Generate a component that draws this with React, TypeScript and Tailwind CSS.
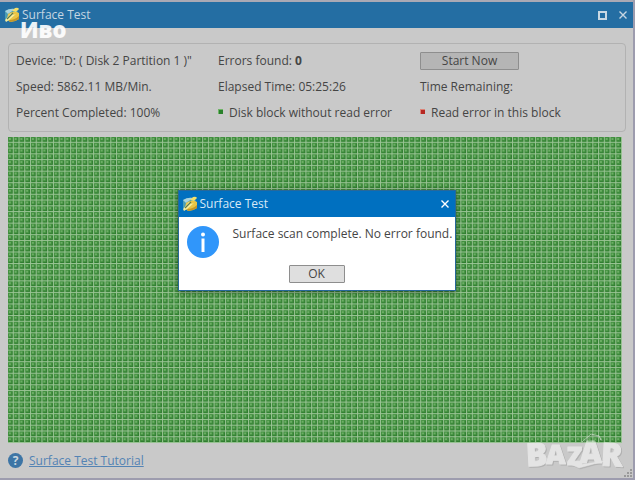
import React from "react";

const COLUMNS = 107;
const ROWS = 53;
const CELL = 6;

const cells = Array.from({ length: COLUMNS * ROWS }, (_, i) => [
  (i % COLUMNS) * CELL,
  Math.floor(i / COLUMNS) * CELL,
]);
const shadePath = cells.map(([x, y]) => `M${x + 5} ${y + 1}v4h-4v-1h3v-3z`).join("");
const glossPath = cells.map(([x, y]) => `M${x + 1} ${y + 1}h2v2h-2z`).join("");
const linePath =
  Array.from({ length: COLUMNS }, (_, i) => `M${i * CELL + 5.5} 0V${ROWS * CELL}`).join("") +
  Array.from({ length: ROWS }, (_, i) => `M0 ${i * CELL + 5.5}H${COLUMNS * CELL}`).join("");

function DiskIcon({ className }: { className: string }) {
  return (
    <svg viewBox="0 0 16 16" className={className} aria-hidden="true">
      <path d="M1 4Q6 1 11 2L14 5 13 12 7 15 1 12Z" fill="#4a9db4" />
      <path d="M1 4Q6 1 11 2L4 7Z" fill="#a9d3de" />
      <path d="M4 7Q10 3 15 6L15 12Q11 15 6 15L3 12Z" fill="#e9c545" />
      <path d="M5 13Q11 13 15 9V12Q11 15 6 15Z" fill="#c3962a" />
      <path d="M1 13 7 6Q9 9 12 7L5 13 2 15Z" fill="#f7ee9f" />
      <path d="M3 12 9 6" stroke="#5c7a4d" strokeWidth="1.2" />
      <path d="M8 4 11 1Q14 0 15 2L12 5Z" fill="#f5df6a" />
    </svg>
  );
}

function Close({ className }: { className: string }) {
  return (
    <svg viewBox="0 0 8 8" className={className} aria-hidden="true">
      <path d="M.5.5 7.5 7.5M7.5.5.5 7.5" stroke="currentColor" strokeWidth="1.4" />
    </svg>
  );
}

function BlockMap() {
  return (
    <svg
      viewBox={`0 0 ${COLUMNS * CELL} ${ROWS * CELL}`}
      preserveAspectRatio="none"
      className="block min-h-0 w-full flex-1"
      role="img"
      aria-label="Disk blocks"
    >
      <rect width="100%" height="100%" fill="#439040" />
      <path d={shadePath} fill="#317d31" />
      <path d={glossPath} fill="#6cae65" />
      <path d={linePath} stroke="#9cc497" strokeWidth="1" />
    </svg>
  );
}

function Legend({ red, children }: { red?: boolean; children: React.ReactNode }) {
  return (
    <div className="flex items-center gap-1.5">
      <span className={`mb-1 size-[5px] border-t border-l ${red ? "border-[#dc8377] bg-[#b62822]" : "border-[#70b568] bg-[#29812b]"}`} />
      <span>{children}</span>
    </div>
  );
}

export default function App() {
  return (
    <div className="relative flex h-screen flex-col overflow-hidden bg-[#9d9cae] pr-0.5 pb-0.5 font-['Open_Sans','Noto_Sans',sans-serif] text-[12px] leading-4 text-[#454545]">
      <div className="grid h-0.5 shrink-0 grid-cols-[103fr_66fr_78fr_95fr_196fr_73fr] items-end overflow-hidden bg-[#aaa9b4] pl-6 text-[11px] leading-3 text-[#555]">
        <span className="-mb-0.5">Capacity</span>
        <span className="-mb-0.5">Used</span>
        <span className="-mb-0.5">Unused</span>
        <span className="-mb-0.5">File System</span>
        <span className="-mb-0.5">Type</span>
        <span className="-mb-0.5">Status</span>
      </div>
      <main className="flex min-h-0 flex-1 flex-col bg-[#c9c9c9]">
        <header className="flex h-[26px] shrink-0 items-center bg-[#246ea3] pr-1.5 pl-1 text-[#c6d6e2]">
          <DiskIcon className="mr-0.5 size-4" />
          <h1>Surface Test</h1>
          <button aria-label="Maximize" className="mr-3 ml-auto size-[9px] border-2 border-[#c9d8e3]" />
          <button aria-label="Close"><Close className="size-2" /></button>
        </header>
        <div className="flex min-h-0 flex-1 flex-col px-2 pt-[15px]">
          <section className="mr-[-1px] grid h-[89px] shrink-0 grid-cols-3 grid-rows-[34px_18px_34px] items-center gap-x-1 rounded border border-[#b2b2b2] px-[7px] whitespace-nowrap">
            <span>Device: "D: ( Disk 2 Partition 1 )"</span>
            <span>Errors found: <b>0</b></span>
            <button className="h-[18px] w-[99px] rounded-[1px] border border-[#8e8e8e] bg-[#b5b5b5] leading-4">Start Now</button>
            <span>Speed: 5862.11 MB/Min.</span>
            <span>Elapsed Time: 05:25:26</span>
            <span>Time Remaining:</span>
            <span>Percent Completed: 100%</span>
            <Legend>Disk block without read error</Legend>
            <Legend red>Read error in this block</Legend>
          </section>
          <div className="flex min-h-0 flex-1 pt-[5px] pr-[3px]"><BlockMap /></div>
          <footer className="flex h-[35px] shrink-0 items-center gap-1.5">
            <span className="flex size-[15px] items-center justify-center rounded-full bg-[#3d75a5] text-[12px] font-bold text-[#c9d6df]">?</span>
            <a href="#tutorial" className="text-[#5383b4] underline">Surface Test Tutorial</a>
          </footer>
        </div>
      </main>

      <div className="absolute inset-0 flex items-center justify-center pr-0.5">
        <div role="dialog" aria-label="Surface Test" className="w-[278px] border border-[#27689a] bg-white shadow-[0_1px_5px_rgba(0,0,0,0.45)]">
          <div className="flex h-[26px] items-center bg-[#0070c0] pr-1.5 pl-[3px] text-[#d7e9f6]">
            <DiskIcon className="mr-0.5 size-4" />
            <h2>Surface Test</h2>
            <button aria-label="Close" className="ml-auto text-white"><Close className="size-2" /></button>
          </div>
          <div className="grid h-[73px] grid-cols-[46px_minmax(0,1fr)] px-2 pt-[9px]">
            <svg viewBox="0 0 32 32" className="size-8" aria-hidden="true">
              <circle cx="16" cy="16" r="16" fill="#3096fa" />
              <circle cx="16" cy="8.5" r="2" fill="white" />
              <path d="M14.5 12.5h3V26h-3z" fill="white" />
            </svg>
            <p className="whitespace-nowrap">Surface scan complete. No error found.</p>
            <button className="col-span-2 h-[18px] w-14 justify-self-center rounded-[1px] border border-[#8e8e8e] bg-[#dfdfdf] leading-4">OK</button>
          </div>
        </div>
      </div>

      <span className="absolute top-[17px] left-5 text-[22px] leading-6 font-extrabold text-white/90">Иво</span>
      <svg
        viewBox="0 0 110 45"
        className="absolute right-[5px] bottom-[7px] h-[45px] w-[110px] opacity-50 drop-shadow-[1px_1px_0_#999]"
        aria-label="BAZAR"
      >
        <g fill="white" stroke="white" strokeWidth="1" strokeLinejoin="round" fontFamily="Open Sans" fontWeight="800">
          <text x="6" y="38" fontSize="32" transform="rotate(-3 16 27)">B</text>
          <text x="26" y="36" fontSize="27">A</text>
          <text x="47" y="37" fontSize="25">Z</text>
          <text x="60" y="35" fontSize="30">A</text>
          <text x="81" y="38" fontSize="32" transform="rotate(3 92 27)">R</text>
          <path d="M48 35 57 37 85 33 59 40Z" strokeWidth=".5" />
          <path d="M62 14 71 6 79 8 81 12" fill="none" />
        </g>
      </svg>
      <svg viewBox="0 0 8 8" className="absolute right-[3px] bottom-[3px] size-2 text-[#999]" aria-hidden="true">
        <path d="M6 0h2v2H6zM3 3h2v2H3zM6 3h2v2H6zM0 6h2v2H0zM3 6h2v2H3zM6 6h2v2H6z" fill="currentColor" />
      </svg>
    </div>
  );
}
